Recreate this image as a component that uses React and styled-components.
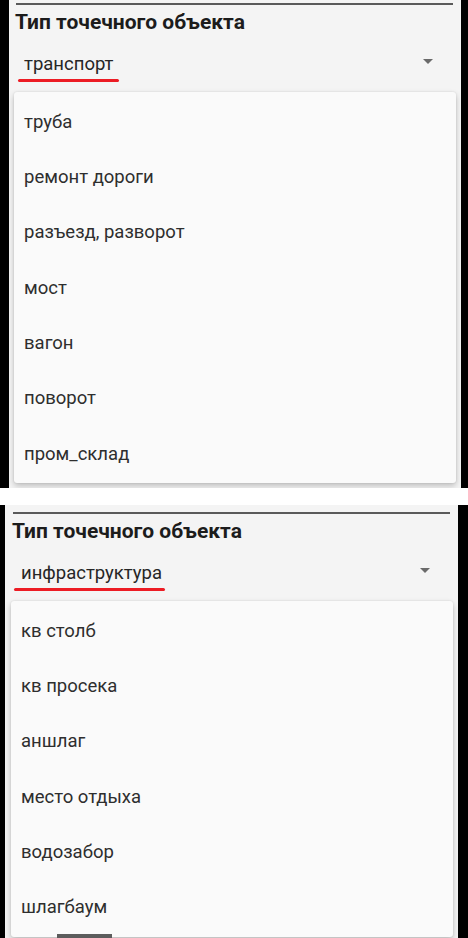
import React from "react";
import styled, { createGlobalStyle } from "styled-components";

const GlobalStyle = createGlobalStyle`
  html, body {
    margin: 0;
    padding: 0;
    background: #ffffff;
  }
  body {
    font-family: Roboto, "Noto Sans", "Liberation Sans", sans-serif;
    -webkit-font-smoothing: antialiased;
  }
`;

const Page = styled.div`
  width: 468px;
  display: flex;
  flex-direction: column;
  gap: 17px;
`;

const Screen = styled.section`
  position: relative;
  height: ${(p) => p.$height}px;
  box-sizing: border-box;
  border-left: ${(p) => p.$left}px solid #000;
  border-right: ${(p) => p.$right}px solid #000;
  background: #f4f4f4;
  padding-top: ${(p) => p.$top}px;
  overflow: hidden;
`;

const Divider = styled.div`
  height: 2px;
  margin: 0 ${(p) => p.$inset}px 0 ${(p) => p.$inset - 1 + (p.$shift || 0)}px;
  background: #5a5a5a;
`;

const Heading = styled.h2`
  margin: 5px 0 0 ${(p) => p.$indent}px;
  font-size: 21px;
  line-height: 24px;
  font-weight: 700;
  color: #1c1c1c;
`;

const SelectRow = styled.div`
  display: flex;
  align-items: center;
  justify-content: space-between;
  height: 34px;
  margin-top: 13px;
  padding: 0 28px 0 ${(p) => p.$indent}px;
`;

const Value = styled.span`
  position: relative;
  font-size: 18.5px;
  line-height: 22px;
  color: #262626;

  &::after {
    content: "";
    position: absolute;
    left: ${(p) => p.$lineLeft}px;
    right: ${(p) => p.$lineRight}px;
    bottom: -7px;
    height: 3px;
    border-radius: 2px;
    background: #ec1c24;
  }
`;

const Caret = styled.span`
  width: 0;
  height: 0;
  border-left: 5px solid transparent;
  border-right: 5px solid transparent;
  border-top: 5px solid #6a6a6a;
  margin-top: -5px;
`;

const Menu = styled.ul`
  list-style: none;
  margin: 11px 5px 0 ${(p) => p.$indent}px;
  padding: 2px 0;
  background: #fafafa;
  border-radius: 3px;
  box-shadow: 0 3px 6px rgba(0, 0, 0, 0.22), 0 0 2px rgba(0, 0, 0, 0.12);
`;

const Item = styled.li`
  height: 55.35px;
  display: flex;
  align-items: center;
  padding-left: 10px;
  font-size: 18.5px;
  color: #2e2e2e;
`;

const NavHandle = styled.div`
  position: absolute;
  left: 52px;
  bottom: 0;
  width: 55px;
  height: 4px;
  background: #5c5c5c;
`;

const Picker = ({ value, items, lineLeft, lineRight, dx }) => (
  <>
    <Heading $indent={6 + dx}>Тип точечного объекта</Heading>
    <SelectRow $indent={15 + dx}>
      <Value $lineLeft={lineLeft} $lineRight={lineRight}>
        {value}
      </Value>
      <Caret />
    </SelectRow>
    <Menu $indent={5 + dx}>
      {items.map((it) => (
        <Item key={it}>{it}</Item>
      ))}
    </Menu>
  </>
);

const transport = [
  "труба",
  "ремонт дороги",
  "разъезд, разворот",
  "мост",
  "вагон",
  "поворот",
  "пром_склад",
];

const infra = [
  "кв столб",
  "кв просека",
  "аншлаг",
  "место отдыха",
  "водозабор",
  "шлагбаум",
];

export default function App() {
  return (
    <Page>
      <GlobalStyle />
      <Screen $height={488} $left={9} $right={7} $top={3}>
        <Divider $inset={8} />
        <Picker
          value="транспорт"
          items={transport}
          lineLeft={-6}
          lineRight={-5}
          dx={0}
        />
      </Screen>
      <Screen $height={433} $left={5} $right={10} $top={7}>
        <Divider $inset={8} $shift={1} />
        <Picker
          value="инфраструктура"
          items={infra}
          lineLeft={-7}
          lineRight={-3}
          dx={1}
        />
        <NavHandle />
      </Screen>
    </Page>
  );
}
